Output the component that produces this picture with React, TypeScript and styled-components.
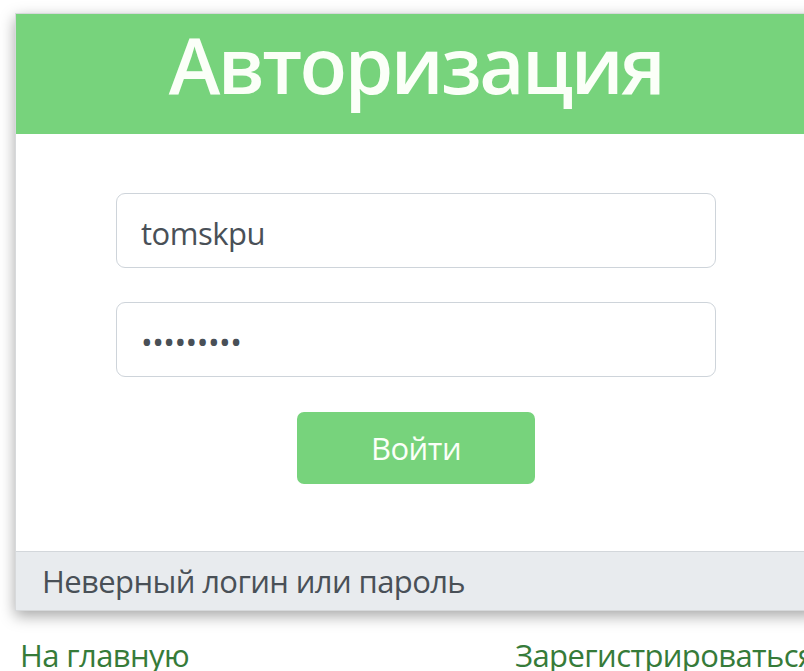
import React from 'react';
import styled, { createGlobalStyle } from 'styled-components';

const GlobalStyle = createGlobalStyle`
  html, body {
    margin: 0;
    padding: 0;
    background: #ffffff;
    overflow: hidden;
  }
  body {
    font-family: 'Open Sans', 'Noto Sans', 'DejaVu Sans', sans-serif;
  }
`;

const Page = styled.div`
  width: 900px;
  padding: 13px 0 0 15px;
`;

const Card = styled.div`
  width: 800px;
  background: #fff;
  border: 1px solid #d7d9db;
  box-shadow: 0 5px 14px rgba(0, 0, 0, 0.35);
  display: flex;
  flex-direction: column;
`;

const Header = styled.div`
  background: #77d37c;
  padding: 11px 0 31px;
  text-align: center;
`;

const Title = styled.h1`
  margin: 0;
  color: #fbfff8;
  font-size: 78px;
  line-height: 78px;
  font-weight: 600;
  letter-spacing: -2.5px;
`;

const Form = styled.form`
  display: flex;
  flex-direction: column;
  align-items: center;
  padding: 59px 100px 67px;
`;

const Input = styled.input<{ $gap?: number }>`
  box-sizing: border-box;
  width: 100%;
  height: 75px;
  margin-bottom: ${p => p.$gap ?? 34}px;
  padding: 4px 24px 0;
  border: 1.5px solid #ced4da;
  border-radius: 9px;
  font-family: inherit;
  font-size: 31px;
  letter-spacing: -0.5px;
  color: #495057;
  background: #fff;
  outline: none;
`;

const SubmitButton = styled.button`
  width: 238px;
  height: 72px;
  border: none;
  border-radius: 7px;
  background: #77d37c;
  color: #fbfff8;
  font-family: inherit;
  font-size: 31px;
  letter-spacing: -0.5px;
  cursor: pointer;
`;

const Footer = styled.div`
  background: #e8ebee;
  border-top: 1.5px solid #d3d7db;
  height: 58px;
  padding: 0 26px;
  display: flex;
  align-items: center;
  font-size: 31px;
  letter-spacing: -0.6px;
  color: #495057;
`;

const LinksRow = styled.div`
  display: grid;
  grid-template-columns: 495px auto;
  margin-top: 21px;
  padding-left: 5px;
`;

const NavLink = styled.a`
  font-size: 31px;
  line-height: 46px;
  letter-spacing: -0.6px;
  color: #367b39;
  text-decoration: none;
  white-space: nowrap;
`;

export default function App() {
  return (
    <>
      <GlobalStyle />
      <Page>
        <Card>
          <Header>
            <Title>Авторизация</Title>
          </Header>
          <Form onSubmit={e => e.preventDefault()}>
            <Input type="text" defaultValue="tomskpu" />
            <Input type="password" defaultValue="123456789" $gap={35} />
            <SubmitButton type="submit">Войти</SubmitButton>
          </Form>
          <Footer>Неверный логин или пароль</Footer>
        </Card>
        <LinksRow>
          <NavLink href="#">На главную</NavLink>
          <NavLink href="#">Зарегистрироваться</NavLink>
        </LinksRow>
      </Page>
    </>
  );
}
